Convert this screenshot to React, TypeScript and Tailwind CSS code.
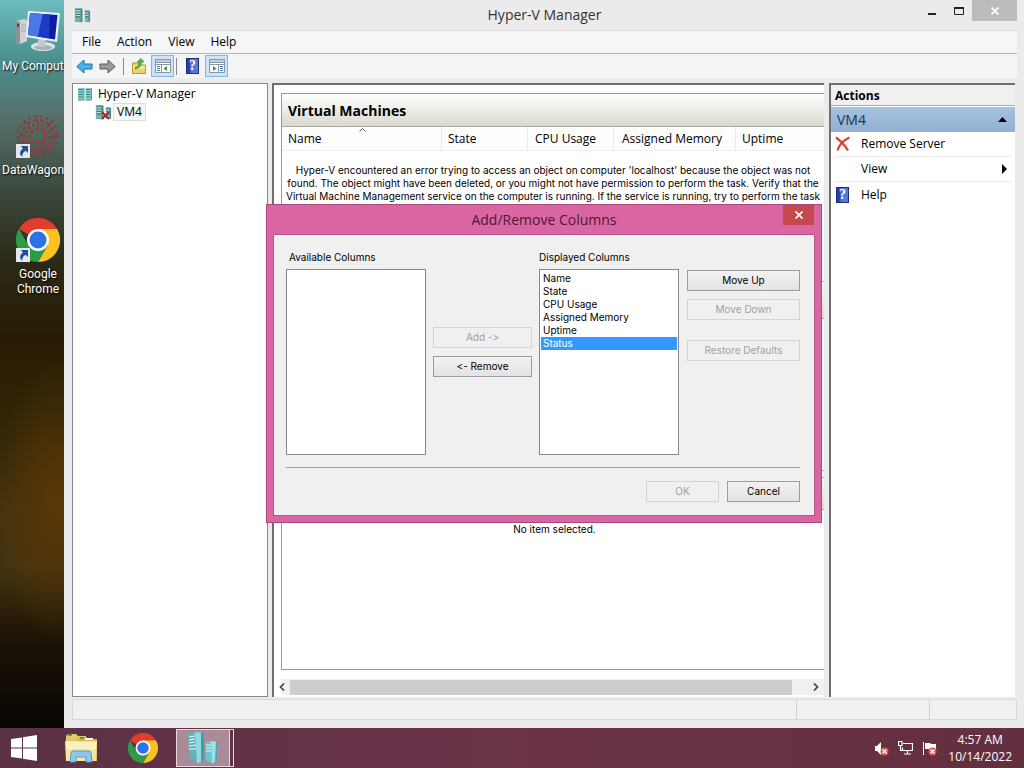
import { useState } from "react";
import type { ReactNode } from "react";

const vmColumns = [
  { label: "Name", width: "w-[160px] pl-[6px]" },
  { label: "State", width: "w-[86px] pl-[6px]" },
  { label: "CPU Usage", width: "w-[86px] pl-[7px]" },
  { label: "Assigned Memory", width: "w-[122px] pl-2" },
  { label: "Uptime", width: "flex-1 pl-[6px]" },
];

const displayedColumns = ["Name", "State", "CPU Usage", "Assigned Memory", "Uptime", "Status"];

const ServerIcon = ({ className }: { className: string }) => (
  <svg viewBox="0 0 18 16" className={className} aria-hidden="true">
    <path d="M1 0.5h6l2 1v14l-2 .3-6-.6z" fill="#3f8a86" />
    <path d="M1 0.5h6v15L1 15z" fill="#79b3ae" />
    <path d="M1.8 2.5h4.5M1.8 5h4.5M1.8 7.5h4.5M1.8 10h4.5" stroke="#2f6b70" strokeWidth="1" />
    <path d="M1.8 3.5h4.5M1.8 6h4.5M1.8 8.5h4.5" stroke="#d9f5f1" strokeWidth="0.8" />
    <path d="M11.5 3h4l1.5 .8v11l-1.5 .5-4-.5z" fill="#3f8a86" />
    <path d="M11.5 3h4v12l-4-.5z" fill="#79b3ae" />
    <path d="M12 5h3M12 7.5h3M12 10h3" stroke="#2f6b70" strokeWidth="1" />
    <path d="M12 6h3M12 8.5h3" stroke="#d9f5f1" strokeWidth="0.8" />
    <path d="M2 12.5h1.5M12 12.5h1.5" stroke="#4fdc6a" strokeWidth="1.2" />
  </svg>
);

const RootIcon = () => (
  <svg viewBox="0 0 16 14" className="h-[14px] w-4" aria-hidden="true">
    <path d="M1 1h6v12H1zM8.500 1h6v12h-6z" fill="#8fd3d0" />
    <path d="M7 1v12M14.500 1v12" stroke="#5b9aa0" />
    <path d="M1.500 2.500H6M1.500 5H6M1.500 7.500H6M1.500 10H6M9 2.500h4.500M9 5h4.500M9 7.500h4.500M9 10h4.500" stroke="#2d7e86" />
    <path d="M1 13h6M8.500 13h6" stroke="#4f7f86" />
  </svg>
);

const ChromeIcon = ({ className }: { className: string }) => (
  <svg viewBox="0 0 48 48" className={className} aria-hidden="true">
    <path d="M24 24 3.200 12A24 24 0 0 1 44.800 12z" fill="#e33b2e" />
    <path d="M24 12h20.800A24 24 0 0 1 24 48l10.400-18z" fill="#fcc31e" />
    <path d="M3.200 12 13.600 30 24 36l0 12A24 24 0 0 1 3.200 12z" fill="#2c9c4b" />
    <path d="M13.600 30 24 48l10.400-18L24 34z" fill="#2c9c4b" />
    <circle cx="24" cy="24" r="12" fill="#fff" />
    <circle cx="24" cy="24" r="9.300" fill="#2c72e8" />
  </svg>
);

const ComputerIcon = () => (
  <svg viewBox="0 0 46 44" className="h-11 w-[46px]" aria-hidden="true">
    <path d="M1 11l8-2 3 1v21l-7 3-4-2z" fill="#cfd3d6" />
    <path d="M1 11l4 1v22l-4-2z" fill="#8d9296" />
    <path d="M2 13.500l2 .5v3l-2-.5z" fill="#3c4b3f" />
    <path d="M6 15h5M6 18h5M6 21h5" stroke="#a5a9ac" />
    <ellipse cx="28" cy="36.500" rx="12" ry="4.500" fill="#dfe3e6" />
    <ellipse cx="28" cy="37.500" rx="9" ry="2.500" fill="#aab2b8" />
    <path d="M23 27l8 2-1 8h-7z" fill="#c3c9ce" />
    <path d="M13 1l32 2-3 29-31-5z" fill="#eef1f4" />
    <path d="M15 3l27.500 2-2.500 24.500-27-4.500z" fill="#0b1fa5" />
    <path d="M15 3l13 1-5 22.500-10-1.500z" fill="#4a79e6" />
    <path d="M28 4l7 .5-1 24-11-2z" fill="#1c3cc6" />
  </svg>
);

const WagonIcon = () => (
  <svg viewBox="0 0 44 44" className="h-11 w-11" fill="none" aria-hidden="true">
    <circle cx="22" cy="22" r="7" stroke="#a83238" strokeWidth="2" strokeDasharray="3 2" />
    <circle cx="22" cy="22" r="12" stroke="#9c3338" strokeWidth="2" strokeDasharray="2 3" />
    <circle cx="22" cy="22" r="16" stroke="#a02f36" strokeWidth="2" strokeDasharray="4 3" />
    <circle cx="22" cy="22" r="20" stroke="#8c3438" strokeWidth="2" strokeDasharray="2 4" />
    <path d="M22 2v13M22 29v13M2 22h13M29 22h13M8 8l9 9M27 27l9 9M36 8l-9 9M17 27l-9 9" stroke="#a0343a" strokeWidth="1.500" strokeDasharray="3 2" />
  </svg>
);

const ShortcutArrow = () => (
  <svg viewBox="0 0 14 14" className="absolute bottom-0 left-0 h-[14px] w-[14px]" aria-hidden="true">
    <path d="M0 0h14v14H0z" fill="#e4e8ee" />
    <path d="M12 2v7l-2.300-2.200C7 8.500 6 10 6.500 12.500 3.500 11.500 3 7 7 4.500L4.800 2z" fill="#1d4f9c" />
  </svg>
);

const DesktopIcon = ({ label, shortcut, wide, children }: { label: ReactNode; shortcut?: boolean; wide?: boolean; children: ReactNode }) => (
  <a href="#" className="flex w-[76px] flex-col items-center gap-[5px] whitespace-nowrap text-center font-[Roboto,'Open_Sans',sans-serif] text-[12px] leading-[15px] text-white [text-shadow:1px_1px_2px_#000]">
    <span className="relative block">
      {children}
      {shortcut && <ShortcutArrow />}
    </span>
    <span className={wide ? "self-start pl-[2px]" : ""}>{label}</span>
  </a>
);

const HelpIcon = () => (
  <span className="flex h-4 w-[13px] items-center justify-center border border-[#1e2f7d] bg-linear-to-r from-[#24409f] from-20% to-[#5577d8] to-40% font-['Liberation_Serif',serif] text-[14px] font-bold leading-none text-white">?</span>
);

const PaneIcon = ({ flip }: { flip?: boolean }) => (
  <svg viewBox="0 0 16 14" className={flip ? "h-[14px] w-4 -scale-x-100" : "h-[14px] w-4"} aria-hidden="true">
    <path d="M.5.5h15v13H.500z" fill="#fff" stroke="#8b97a5" />
    <path d="M1 1h14v2.500H1z" fill="#c3cfdd" />
    <path d="M.5 3.500h15M.5 5.500h15M6.500 5.500v8" stroke="#8b97a5" />
    <path d="M2 7.500h3M2 9.500h3M2 11.500h3" stroke="#4b76a8" />
    <path d="M12 7v5L8.500 9.500z" fill="#3d9a2c" />
  </svg>
);

const Arrow = ({ back }: { back?: boolean }) => (
  <svg viewBox="0 0 17 15" className="h-[15px] w-[17px]" aria-hidden="true">
    {back ? (
      <path d="M.8 7.500 8 1v4h8v5H8v4z" fill="#4bb0ee" stroke="#1a6fb0" />
    ) : (
      <path d="M16.200 7.500 9 1v4H1v5h8v4z" fill="#9a9a9a" stroke="#5c5c5c" />
    )}
  </svg>
);

const CloseCross = () => (
  <svg viewBox="0 0 8 8" className="h-2 w-2" aria-hidden="true">
    <path d="M.5.5l7 7M7.500.5l-7 7" stroke="#fff" strokeWidth="1.700" />
  </svg>
);

const Button = ({ children, className = "", disabled }: { children: ReactNode; className?: string; disabled?: boolean }) => (
  <button
    type="button"
    disabled={disabled}
    className={`h-[21px] shrink-0 border border-[#9c9c9c] bg-linear-to-b from-[#f2f2f2] to-[#e3e3e3] leading-[13px] text-black [font-feature-settings:'calt'_0] disabled:border-[#d4d4d4] disabled:bg-none disabled:text-[#a0a0a0] ${className}`}
  >
    {children}
  </button>
);

const ColumnsDialog = () => {
  const [selected, setSelected] = useState("Status");

  return (
    <div role="dialog" aria-label="Add/Remove Columns" className="absolute inset-x-0 top-[204px] mx-auto flex h-[319px] w-[556px] flex-col border border-[#a8487f] bg-[#d966a3] px-[6px] pb-[6px] font-[Inter,'Liberation_Sans',sans-serif] text-[10px] leading-[13px]">
      <div className="relative flex h-[29px] shrink-0 items-center justify-center font-['Open_Sans','Noto_Sans',sans-serif] text-[14px] leading-5 text-[#4f1838]">
        Add/Remove Columns
        <button type="button" aria-label="Close" className="absolute right-px top-0 flex h-5 w-[31px] items-center justify-center bg-[#c4484c]">
          <CloseCross />
        </button>
      </div>
      <div className="flex flex-1 flex-col border border-[#b8558c] bg-[#f0f0f0] pl-3 pr-[14px] pt-4">
        <div className="flex items-start">
          <div className="flex w-[140px] flex-col gap-[5px]">
            <label htmlFor="available" className="pl-[3px]">Available Columns</label>
            <select id="available" size={14} className="h-[186px] appearance-none border border-[#828790] bg-white" />
          </div>
          <div className="mx-[7px] flex w-[99px] flex-col gap-2 pt-[76px]">
            <Button disabled>Add -&gt;</Button>
            <Button>&lt;- Remove</Button>
          </div>
          <div className="flex w-[140px] flex-col gap-[5px]">
            <label htmlFor="displayed">Displayed Columns</label>
            <select
              id="displayed"
              size={14}
              value={selected}
              onChange={(e) => setSelected(e.target.value)}
              className="h-[186px] appearance-none overflow-hidden border border-[#828790] bg-white px-px py-[2px]"
            >
              {displayedColumns.map((name) => (
                <option key={name} value={name} className="h-[13px] min-h-0 px-[2px] py-0 leading-[13px] checked:bg-[linear-gradient(#3399ff,#3399ff)] checked:text-white checked:[-webkit-text-fill-color:#fff]">
                  {name}
                </option>
              ))}
            </select>
          </div>
          <div className="ml-2 flex flex-1 flex-col pt-[19px]">
            <Button>Move Up</Button>
            <Button disabled className="mt-2">Move Down</Button>
            <Button disabled className="mt-5">Restore Defaults</Button>
          </div>
        </div>
        <div className="mt-3 border-t border-[#a0a0a0]" />
        <div className="mt-[13px] flex justify-end gap-2">
          <Button disabled className="w-[73px]">OK</Button>
          <Button className="w-[73px]">Cancel</Button>
        </div>
      </div>
    </div>
  );
};

const Toolbar = () => (
  <div className="flex h-6 items-center bg-[#f4f5f7] pl-1">
    <button type="button" aria-label="Back" className="mr-[6px]"><Arrow back /></button>
    <button type="button" aria-label="Forward"><Arrow /></button>
    <span className="mx-[7px] h-[17px] w-px bg-[#8a8a8a]" />
    <button type="button" aria-label="Up one level" className="mr-1">
      <svg viewBox="0 0 16 16" className="h-4 w-4" aria-hidden="true">
        <path d="M1.500 5H7l1.500 2h6v8.500h-13z" fill="#f0d26a" stroke="#b99733" />
        <path d="M2 8h12v3H2z" fill="#f9e79a" />
        <path d="M4 9.500C7 9 8 7 8 4H6l4-3.500L13 4h-2.500c0 4-2 6-6.500 7z" fill="#58b947" stroke="#2f8a28" strokeWidth=".6" />
      </svg>
    </button>
    <button type="button" aria-label="Show tree" className="flex h-[22px] w-[23px] items-center justify-center border border-[#84b4e4] bg-[#cde4f8]"><PaneIcon /></button>
    <span className="ml-[2px] mr-[9px] h-[17px] w-px bg-[#8a8a8a]" />
    <button type="button" aria-label="Help" className="mr-[6px]"><HelpIcon /></button>
    <button type="button" aria-label="Show actions" className="flex h-[22px] w-[23px] items-center justify-center border border-[#84b4e4] bg-[#cde4f8]"><PaneIcon flip /></button>
  </div>
);

const MachinePane = () => (
  <main className="ml-1 flex min-w-0 flex-1 flex-col border-l-2 border-t-2 border-[#6f6f6f] bg-white pl-[7px] pt-2">
    <div className="flex min-h-0 flex-1 flex-col border-y border-l border-[#9a9a9a]">
      <h2 className="h-[33px] shrink-0 border-b border-[#a9a99f] bg-linear-to-b from-white to-[#d9d9d0] pl-[6px] text-[14px] font-bold leading-[34px]">Virtual Machines</h2>
      <table className="w-full">
        <thead className="block">
          <tr className="flex h-6 border-b border-[#f0f0f0] bg-[#fdfdfd]">
            {vmColumns.map((col) => (
              <th key={col.label} scope="col" className={`relative border-r border-[#e9e9e9] text-left font-normal leading-6 last:border-r-0 ${col.width}`}>
                {col.label}
                {col.label === "Name" && (
                  <svg viewBox="0 0 7 4" className="absolute left-[77px] top-px h-1 w-[7px]"><path d="M.5 3.500l3-3 3 3" fill="none" stroke="#555" /></svg>
                )}
              </th>
            ))}
          </tr>
        </thead>
      </table>
      <p className="whitespace-nowrap pt-[13px] text-center font-[Inter,'Liberation_Sans',sans-serif] text-[10px] leading-[13px]">
        Hyper-V encountered an error trying to access an object on computer 'localhost' because the object was not
        <br />
        found. The object might have been deleted, or you might not have permission to perform the task. Verify that the
        <br />
        Virtual Machine Management service on the computer is running. If the service is running, try to perform the task
      </p>
      <div className="mt-[78px] h-[38px] shrink-0 border-y border-[#a9a99f] bg-linear-to-b from-white to-[#d9d9d0]" />
      <div className="h-[152px] shrink-0 border-b border-[#a9a99f]" />
      <div className="mt-[6px] h-[33px] shrink-0 border-y border-[#a9a99f] bg-linear-to-b from-white to-[#d9d9d0]" />
      <p className="pl-[3px] pt-[13px] text-center font-[Inter,'Liberation_Sans',sans-serif] text-[10px] leading-[13px]">No item selected.</p>
    </div>
    <div className="mb-[2px] mt-[9px] flex h-4 shrink-0 items-center bg-[#f0f0f0]">
      <button type="button" aria-label="Scroll left" className="-ml-[7px] flex h-4 w-4 items-center justify-center">
        <svg viewBox="0 0 6 8" className="h-2 w-[6px]"><path d="M5 .5L1.500 4 5 7.500" fill="none" stroke="#444" strokeWidth="1.700" /></svg>
      </button>
      <div className="h-[15px] flex-1 bg-[#cdcdcd]" />
      <button type="button" aria-label="Scroll right" className="ml-4 flex h-4 w-4 items-center justify-center">
        <svg viewBox="0 0 6 8" className="h-2 w-[6px]"><path d="M1 .5L4.500 4 1 7.500" fill="none" stroke="#444" strokeWidth="1.700" /></svg>
      </button>
    </div>
  </main>
);

const ActionsPane = () => (
  <aside className="ml-[5px] mr-[2px] flex w-[186px] shrink-0 flex-col border-l-2 border-t-2 border-[#6f6f6f] bg-white">
    <h2 className="h-[21px] border-b border-[#a8a8a8] bg-[#f0f0f0] pl-1 text-[12px] font-bold leading-[21px]">Actions</h2>
    <h3 className="mt-px flex h-[25px] items-center justify-between bg-linear-to-b from-[#a6c1e0] to-[#91b1d3] pl-[6px] pr-2 text-[14px] text-[#1d3550]">
      VM4
      <svg viewBox="0 0 9 5" className="h-[5px] w-[9px]"><path d="M0 5L4.500 0 9 5z" fill="#000" /></svg>
    </h3>
    <button type="button" className="mx-1 flex h-[25px] items-center gap-[10px] border-b border-[#ececec]">
      <svg viewBox="0 0 16 16" className="h-4 w-4"><path d="M1 1.500c5 3.500 9 8 12 13M14.500 1.500C9 4 4 9 2.500 14.500" fill="none" stroke="#d8432f" strokeWidth="2.200" /></svg>
      Remove Server
    </button>
    <button type="button" className="mx-1 flex h-[25px] items-center justify-between border-b border-[#ececec] pl-[26px] pr-1">
      View
      <svg viewBox="0 0 5 10" className="h-[10px] w-[5px]"><path d="M0 0l5 5-5 5z" fill="#000" /></svg>
    </button>
    <button type="button" className="mx-[5px] flex h-[25px] items-center gap-3">
      <HelpIcon />
      Help
    </button>
  </aside>
);

const HyperVWindow = () => (
  <section className="relative flex min-w-0 flex-1 flex-col bg-[#ebebeb] pb-2 pl-2 pr-[7px]">
    <header className="relative flex h-[30px] shrink-0 items-center justify-center text-[14px] text-[#333]">
      <ServerIcon className="absolute left-[2px] top-[7px] h-4 w-[17px]" />
      <h1>Hyper-V Manager</h1>
      <div className="absolute right-0 top-0 flex h-[21px] text-[#222]">
        <button type="button" aria-label="Minimize" className="flex w-[27px] items-center justify-center">
          <svg viewBox="0 0 8 8" className="h-2 w-2"><path d="M0 7h8" stroke="currentColor" strokeWidth="2" /></svg>
        </button>
        <button type="button" aria-label="Maximize" className="flex w-[27px] items-center justify-center">
          <svg viewBox="0 0 10 8" className="h-2 w-[10px]"><path d="M.5 1h9v6.500h-9z" fill="none" stroke="currentColor" /><path d="M0 1h10" stroke="currentColor" strokeWidth="2" /></svg>
        </button>
        <button type="button" aria-label="Close" className="flex w-[45px] items-center justify-center bg-[#bcbcbc]">
          <CloseCross />
        </button>
      </div>
    </header>
    <nav className="flex h-6 shrink-0 items-center gap-4 border-b border-t border-b-[#b4b4b4] border-t-[#dcdcdc] bg-[#f5f6f7] pl-[10px]">
      <button type="button">File</button>
      <button type="button">Action</button>
      <button type="button">View</button>
      <button type="button">Help</button>
    </nav>
    <Toolbar />
    <div className="mt-[5px] flex min-h-0 flex-1">
      <aside className="w-[196px] shrink-0 border border-[#828790] bg-white pl-1 pt-px">
        <div className="flex h-[18px] items-center gap-[5px]"><RootIcon />Hyper-V Manager</div>
        <div className="ml-[18px] flex h-[18px] items-center">
          <span className="relative">
            <ServerIcon className="h-4 w-[17px]" />
            <svg viewBox="0 0 9 9" className="absolute bottom-0 left-[6px] h-[9px] w-[9px]"><path d="M1 1l7 7M8 1L1 8" stroke="#b3202c" strokeWidth="2" /></svg>
          </span>
          <span className="ml-px border border-[#dedede] bg-[#f7f7f7] px-[3px] leading-4">VM4</span>
        </div>
      </aside>
      <MachinePane />
      <ActionsPane />
    </div>
    <footer className="mt-[2px] flex h-[21px] shrink-0 justify-end border border-[#d9d9d9] bg-[#f0f0f0]">
      <span className="w-[133px] border-l border-[#d0d0d0]" />
      <span className="w-[87px] border-l border-[#d0d0d0]" />
    </footer>
    <ColumnsDialog />
  </section>
);

const Taskbar = () => (
  <footer className="flex h-10 shrink-0 items-center bg-linear-to-r from-[#5b3146] via-[#6a3348] to-[#63303f] text-white">
    <button type="button" aria-label="Start" className="ml-[11px]">
      <svg viewBox="0 0 26 26" className="h-[26px] w-[26px]"><path d="M0 4l11-1.600V12.500H0zM12 2.200L26 0v12.500H12zM0 13.500h11v10.100L0 22zM12 13.500h14V26l-14-2.200z" fill="#fff" /></svg>
    </button>
    <button type="button" aria-label="File Explorer" className="ml-7">
      <svg viewBox="0 0 33 30" className="h-[30px] w-[33px]">
        <path d="M1 3l2-2h8l2 2h8v24H1z" fill="#e6c76a" />
        <path d="M13 4h8l2 2h9v22H10z" fill="#d9b552" />
        <path d="M3 2h4M15 5h4" stroke="#4c9c4a" strokeWidth="2" />
        <path d="M20 6h8" stroke="#fff" strokeWidth="2" />
        <path d="M0 8h32l-1 20H1z" fill="#f8e6a0" />
        <path d="M1 9h30v7H1z" fill="#fcf1bd" />
        <path d="M5 29l1-9q0-2 2-2h16q2 0 2 2l1 9h-6v-5H11v5z" fill="#8fc9ea" stroke="#4b9bc9" />
      </svg>
    </button>
    <button type="button" aria-label="Google Chrome" className="ml-[30px]"><ChromeIcon className="h-[30px] w-[30px]" /></button>
    <button type="button" aria-label="Hyper-V Manager" className="ml-[18px] flex">
      <span className="flex h-[38px] w-[54px] items-center justify-center border border-[#e8d9df] bg-[#a98c98]">
        <svg viewBox="0 0 32 34" className="h-[34px] w-8">
          <path d="M1 3l7-2 2 30-7-3z" fill="#5fb5bf" />
          <path d="M8 1l9 1v27l-7 4z" fill="#8fdbe0" />
          <path d="M14 2l3 0v27l-3 2z" fill="#3f9fae" />
          <path d="M2 6l6-1M2 9l6-1M2 12l6-1M2 15l7-1M2 18l7 0" stroke="#e8fbfb" />
          <path d="M18 11l6-1 1 22-6-2z" fill="#6cc3cb" />
          <path d="M24 10l7 1-1 18-5 4z" fill="#9be2e5" />
          <path d="M29 11l2 0-1 18-2 2z" fill="#48a6b3" />
          <path d="M19 14l5 0M19 17l5 0M19 20l5 0" stroke="#e8fbfb" />
        </svg>
      </span>
      <span className="h-[38px] w-1 border-y border-r border-[#e8d9df]" />
    </button>
    <div className="ml-auto flex items-center gap-[9px]">
      <svg viewBox="0 0 15 15" className="h-[15px] w-[15px]">
        <path d="M1 5h2l4-4v13l-4-4H1z" fill="#fff" />
        <circle cx="10.500" cy="10.500" r="4" fill="#d8574f" /><path d="M8.500 8.500l4 4M12.500 8.500l-4 4" stroke="#fff" strokeWidth="1.300" />
      </svg>
      <svg viewBox="0 0 15 14" className="h-[14px] w-[15px]" fill="none" stroke="#fff">
        <path d="M5 2.500h9.500v7H4.500v-3M9.500 9.500v3M6 13h7M.5.5h3.500v4H.500zM2.500 4.500v5h2" strokeWidth="1.200" />
      </svg>
      <svg viewBox="0 0 15 15" className="h-[15px] w-[15px]">
        <path d="M1.500 1v13" stroke="#fff" /><path d="M3 2h5l1 1h5v6H8L7 8H3z" fill="#fff" />
        <circle cx="10.500" cy="10.500" r="4" fill="#d8574f" /><path d="M8.500 8.500l4 4M12.500 8.500l-4 4" stroke="#fff" strokeWidth="1.300" />
      </svg>
    </div>
    <div className="ml-[11px] mr-3 text-center leading-[17px]">
      <div>4:57 AM</div>
      <div>10/14/2022</div>
    </div>
  </footer>
);

export default function App() {
  return (
    <div className="flex h-screen flex-col overflow-hidden font-['Open_Sans','Noto_Sans',sans-serif] text-[12px] leading-4 text-black">
      <div className="flex min-h-0 flex-1">
        <div className="flex w-16 shrink-0 flex-col gap-10 overflow-hidden bg-[radial-gradient(60px_140px_at_56px_500px,#5a3606,transparent),linear-gradient(#6cbcbd_0%,#4b9190_8%,#56706a_16%,#3c4a3e_26%,#2b2a16_36%,#281c04_46%,#2f2506_58%,#44320f_70%,#42330f_78%,#1c1206_88%,#080704_100%)] pt-[10px]">
          <DesktopIcon label="My Computer" wide><ComputerIcon /></DesktopIcon>
          <DesktopIcon label="DataWagon" shortcut wide><WagonIcon /></DesktopIcon>
          <DesktopIcon label={<>Google<br />Chrome</>} shortcut><ChromeIcon className="h-11 w-11" /></DesktopIcon>
        </div>
        <HyperVWindow />
      </div>
      <Taskbar />
    </div>
  );
}
